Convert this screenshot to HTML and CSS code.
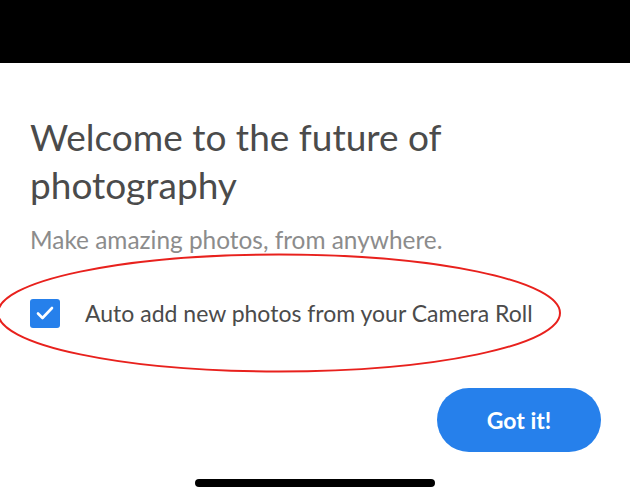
FILE: index.html
```html
<!DOCTYPE html>
<html lang="en">
<head>
  <meta charset="UTF-8">
  <meta name="viewport" content="width=device-width, initial-scale=1.0">
  <title>Welcome</title>
  <link rel="stylesheet" href="styles.css">
</head>
<body>
  <div class="status-bar"></div>

  <div class="sheet">
    <h1 class="title">Welcome to the future of photography</h1>
    <p class="subtitle">Make amazing photos, from anywhere.</p>

    <label class="option">
      <span class="check">
        <svg width="18" height="14" viewBox="0 0 18 14">
          <path d="M2 7.5 L6.5 12 L16 2" fill="none" stroke="#fff" stroke-width="2.6" stroke-linecap="round" stroke-linejoin="round"/>
        </svg>
      </span>
      <span class="option-text">Auto add new photos from your Camera Roll</span>
      <svg class="mark" width="566" height="122" viewBox="0 0 566 122">
        <ellipse cx="283" cy="61" rx="281" ry="58.5" fill="none" stroke="#e8211d" stroke-width="2"/>
      </svg>
    </label>

    <div class="actions">
      <button class="btn">Got it!</button>
    </div>

    <div class="home-bar"></div>
  </div>
</body>
</html>
```

FILE: styles.css
```css
* {margin: 0; padding: 0; box-sizing: border-box;}
html, body {height: 100%;}
body {
  width: 630px;
  height: 500px;
  overflow: hidden;
  background: #fff;
  font-family: Lato, "Noto Sans", sans-serif;
  color: #4b4b4b;
}
.status-bar {
  height: 63px;
  background: #000;
}
.sheet {
  height: 437px;
  display: flex;
  flex-direction: column;
  padding: 50px 29px 0 30px;
}
.title {
  font-size: 37px;
  font-weight: 400;
  line-height: 48px;
  width: 430px;
}
.subtitle {
  margin-top: 16px;
  font-size: 24.4px;
  line-height: 30px;
  color: #8c8c8c;
}
.option {
  position: relative;
  display: flex;
  align-items: center;
  gap: 25px;
  margin-top: 38px;
  height: 40px;
}
.check {
  width: 30px;
  height: 29px;
  border-radius: 3px;
  background: #2680eb;
  display: flex;
  align-items: center;
  justify-content: center;
  flex-shrink: 0;
}
.option-text {
  font-size: 23px;
}
.mark {
  position: absolute;
  left: -34px;
  top: -41px;
}
.actions {
  display: flex;
  justify-content: flex-end;
  margin-top: 55px;
}
.btn {
  width: 164px;
  height: 64px;
  border: 0;
  border-radius: 32px;
  background: #2680eb;
  color: #fff;
  font-family: Lato, "Noto Sans", sans-serif;
  font-size: 23px;
  font-weight: 700;
}
.home-bar {
  align-self: center;
  width: 240px;
  height: 8px;
  border-radius: 4px;
  background: #000;
  margin-top: 27px;
  margin-left: -1px;
}
```
